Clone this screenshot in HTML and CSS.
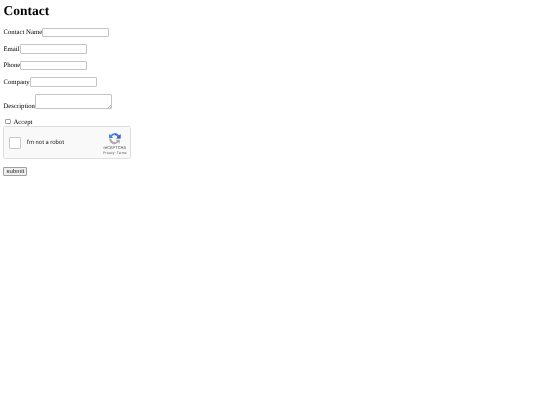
FILE: index.html
```html
<!DOCTYPE html>
<html lang="en">
  <head>
    <meta charset="UTF-8" />
    <meta name="viewport" content="width=device-width,initial-scale=1.0" />
    <title>Contact</title>
    <link rel="stylesheet" href="styles.css">
  </head>
  <body>
    <h1 class="title">Contact</h1>
    <form class="contact-form">
      <p class="field"><label>Contact Name</label><input type="text" class="text-input"></p>
      <p class="field"><label>Email</label><input type="text" class="text-input"></p>
      <p class="field"><label>Phone</label><input type="text" class="text-input"></p>
      <p class="field"><label>Company</label><input type="text" class="text-input"></p>
      <p class="field field-area"><label>Description</label><textarea class="text-area"></textarea></p>
      <div class="accept"><input type="checkbox" class="accept-box"><label>Accept</label></div>
      <div class="captcha">
        <div class="captcha-box"></div>
        <div class="captcha-label">I'm not a robot</div>
        <div class="captcha-brand">
          <svg class="captcha-logo" viewBox="0 0 32 32" width="13" height="13">
            <path d="M16 3A13 13 0 0 1 27 9L31 5V16H20L24 12A8.500 8.500 0 0 0 16 7.500Z" fill="#1c3aa9"/>
            <path d="M29 16H29A13 13 0 0 0 6 7.700L2.500 4.500V15H13L9.500 11.400A8.500 8.500 0 0 1 16 7.500V3Z" fill="#4285f4"/>
            <path d="M3 16H8A8.500 8.500 0 0 0 22 22.500L18.500 19H29V29L25.500 25.500A13 13 0 0 1 3 16Z" fill="#ababab"/>
          </svg>
          <div class="captcha-name">reCAPTCHA</div>
          <div class="captcha-links">Privacy - Terms</div>
        </div>
      </div>
      <button type="button" class="submit-btn">submit</button>
    </form>
  </body>
</html>
```

FILE: styles.css
```css
body {
  margin: 3.4px;
  font-family: "Liberation Serif", serif;
  font-size: 6.75px;
  color: #000;
  background-color: #fff;
  text-rendering: geometricPrecision;
  filter: blur(0.3px);
}
.title {
  margin: 0 0 8.6px;
  font-size: 13.5px;
  line-height: 16px;
  font-weight: bold;
}
.field {
  display: flex;
  align-items: flex-end;
  margin: 0 0 7.3px;
  line-height: 9px;
}
.field-area label {
  margin-bottom: -2px;
}
.text-input {
  box-sizing: border-box;
  width: 67px;
  height: 9.2px;
  margin: 0;
  padding: 0;
  border: 0.6px solid #c4c4c4;
  border-radius: 1px;
}
.text-area {
  box-sizing: border-box;
  width: 77px;
  height: 15.2px;
  margin: 0;
  padding: 0;
  border: 0.6px solid #c4c4c4;
  border-radius: 1px;
}
.text-area::-webkit-resizer {
  background: linear-gradient(135deg, transparent 88%, #b0b0b0 88%, #b0b0b0 91%, transparent 91%, transparent 94%, #b0b0b0 94%, #b0b0b0 97%, transparent 97%);
}
.accept {
  display: flex;
  align-items: center;
  box-sizing: border-box;
  height: 9.5px;
  padding-top: 0.5px;
}
.accept label {
  margin-top: 1.5px;
}
.accept-box {
  appearance: none;
  box-sizing: border-box;
  width: 5.6px;
  height: 5.6px;
  margin: 0 2.4px 0 2px;
  background-color: #fff;
  border: 0.6px solid #a0a0a0;
  border-radius: 1px;
}
.captcha {
  display: flex;
  align-items: center;
  box-sizing: border-box;
  width: 128px;
  height: 33px;
  margin-bottom: 8px;
  padding: 0 4px 0 5px;
  background-color: #f9f9f9;
  border: 0.5px solid #dedede;
  border-radius: 1.5px;
  font-family: Roboto, "Liberation Sans", sans-serif;
}
.captcha-box {
  box-sizing: border-box;
  width: 12px;
  height: 12px;
  margin-top: 1px;
  background-color: #fff;
  border: 0.8px solid #c8c8c8;
  border-radius: 1px;
}
.captcha-label {
  margin: 2px 0 0 5px;
  font-size: 5.9px;
  color: #222;
}
.captcha-brand {
  display: flex;
  flex-direction: column;
  align-items: center;
  margin-left: auto;
  padding-top: 3px;
  color: #555;
}
.captcha-logo {
  display: block;
  margin-bottom: 1px;
}
.captcha-name {
  font-size: 4.2px;
  line-height: 5px;
}
.captcha-links {
  font-size: 3.4px;
  line-height: 5px;
}
.submit-btn {
  display: block;
  box-sizing: border-box;
  width: 24px;
  height: 9px;
  margin: 0;
  padding: 0;
  font-family: "Liberation Sans", sans-serif;
  font-size: 6px;
  line-height: 1;
  color: #222;
  background-color: #efefef;
  border: 0.6px solid #a0a0a0;
  border-radius: 1px;
}
```
